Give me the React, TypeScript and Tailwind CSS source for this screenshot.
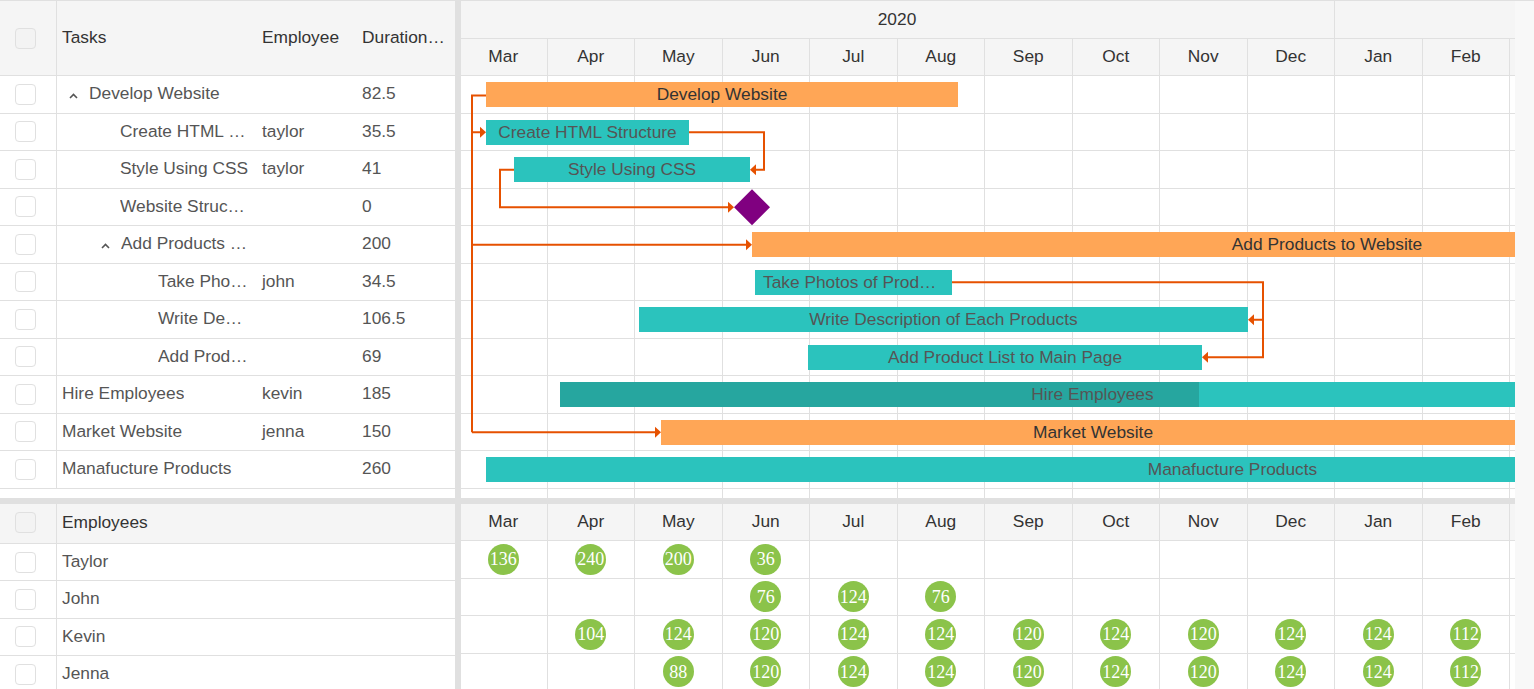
import React from 'react';

const months = ['Mar', 'Apr', 'May', 'Jun', 'Jul', 'Aug', 'Sep', 'Oct', 'Nov', 'Dec', 'Jan', 'Feb', 'Mar'];

type Task = { name: string; emp: string; dur: string; indent: string; chevron?: boolean };

const tasks: Task[] = [
  { name: 'Develop Website', emp: '', dur: '82.5', indent: 'pl-[7px]', chevron: true },
  { name: 'Create HTML Structure', emp: 'taylor', dur: '35.5', indent: 'pl-[58px]' },
  { name: 'Style Using CSS', emp: 'taylor', dur: '41', indent: 'pl-[58px]' },
  { name: 'Website Structure Complete', emp: '', dur: '0', indent: 'pl-[58px]' },
  { name: 'Add Products to Website', emp: '', dur: '200', indent: 'pl-[39px]', chevron: true },
  { name: 'Take Photos of Products', emp: 'john', dur: '34.5', indent: 'pl-[96px]' },
  { name: 'Write Description of Each Products', emp: '', dur: '106.5', indent: 'pl-[96px]' },
  { name: 'Add Product List to Main Page', emp: '', dur: '69', indent: 'pl-[96px]' },
  { name: 'Hire Employees', emp: 'kevin', dur: '185', indent: 'pl-0' },
  { name: 'Market Website', emp: 'jenna', dur: '150', indent: 'pl-0' },
  { name: 'Manafucture Products', emp: '', dur: '260', indent: 'pl-0' },
];

const ORANGE = 'bg-[#ffa656] text-[#333]';
const TEAL = 'bg-[#2bc3bd] text-[#555]';

const bars: { cls: string; label: string }[] = [
  { cls: `left-[25px] top-[6px] w-[472px] ${ORANGE}`, label: 'Develop Website' },
  { cls: `left-[25px] top-[43.5px] w-[203px] ${TEAL}`, label: 'Create HTML Structure' },
  { cls: `left-[53px] top-[81px] w-[236px] ${TEAL}`, label: 'Style Using CSS' },
  { cls: `left-[291px] top-[156px] w-[1150px] ${ORANGE}`, label: 'Add Products to Website' },
  { cls: `left-[294px] top-[193.5px] w-[197px] ${TEAL}`, label: 'Take Photos of Products' },
  { cls: `left-[178px] top-[231px] w-[609px] ${TEAL}`, label: 'Write Description of Each Products' },
  { cls: `left-[347px] top-[268.5px] w-[394px] ${TEAL}`, label: 'Add Product List to Main Page' },
  { cls: `left-[200px] top-[343.5px] w-[864px] ${ORANGE}`, label: 'Market Website' },
  { cls: `left-[25px] top-[381px] w-[1493px] ${TEAL}`, label: 'Manafucture Products' },
];

const employees: { name: string; vals: (number | null)[] }[] = [
  { name: 'Taylor', vals: [136, 240, 200, 36, null, null, null, null, null, null, null, null, null] },
  { name: 'John', vals: [null, null, null, 76, 124, 76, null, null, null, null, null, null, null] },
  { name: 'Kevin', vals: [null, 104, 124, 120, 124, 124, 120, 124, 120, 124, 124, 112, null] },
  { name: 'Jenna', vals: [null, null, 88, 120, 124, 124, 120, 124, 120, 124, 124, 112, null] },
];

function Checkbox({ header }: { header?: boolean }) {
  return (
    <div
      className={`w-[21px] h-[21px] rounded-[4px] border border-[#e0e0e0] ${header ? 'bg-[#f3f3f3]' : 'bg-white'}`}
    />
  );
}

function Chevron() {
  return (
    <svg width="9" height="6" viewBox="0 0 9 6" className="mt-[3px] mr-[11px] shrink-0">
      <polyline points="1,5 4.5,1.5 8,5" fill="none" stroke="#555" strokeWidth="1.6" />
    </svg>
  );
}

function TopGrid() {
  return (
    <div className="w-[455px] shrink-0 flex flex-col">
      <div className="h-[76px] flex border-y border-[#e0e0e0] bg-[#f5f5f5] text-[#333]">
        <div className="w-[57px] shrink-0 border-r border-[#e0e0e0] flex items-center pl-[15px]">
          <Checkbox header />
        </div>
        <div className="w-[199px] shrink-0 pl-[5px] pr-[7px] flex items-center">Tasks</div>
        <div className="w-[100px] shrink-0 px-[6px] flex items-center">Employee</div>
        <div className="w-[99px] shrink-0 pl-[6px] pr-[8px] flex items-center min-w-0">
          <span className="truncate">Duration (days)</span>
        </div>
      </div>
      {tasks.map((t, i) => (
        <div key={i} className="h-[37.5px] shrink-0 flex border-b border-[#e0e0e0]">
          <div className="w-[57px] shrink-0 border-r border-[#e0e0e0] flex items-center pl-[15px]">
            <Checkbox />
          </div>
          <div className="w-[199px] shrink-0 pl-[5px] pr-[7px] flex items-center min-w-0">
            <div className={`flex items-center min-w-0 ${t.indent}`}>
              {t.chevron && <Chevron />}
              <span className="truncate">{t.name}</span>
            </div>
          </div>
          <div className="w-[100px] shrink-0 px-[6px] flex items-center">{t.emp}</div>
          <div className="w-[99px] shrink-0 pl-[6px] pr-[8px] flex items-center">{t.dur}</div>
        </div>
      ))}
    </div>
  );
}

function TopChart() {
  return (
    <div className="w-[1054px] shrink-0 overflow-hidden flex flex-col">
      <div className="h-[39px] shrink-0 flex -ml-px border-y border-[#e0e0e0] bg-[#f5f5f5] text-[#333]">
        <div className="w-[875px] shrink-0 border-r border-[#e0e0e0] flex items-center justify-center">2020</div>
        <div className="w-[1050px] shrink-0 flex items-center justify-center">2021</div>
      </div>
      <div className="h-[37px] shrink-0 flex -ml-px border-b border-[#e0e0e0] bg-[#f5f5f5] text-[#333]">
        {months.map((m, i) => (
          <div key={i} className="w-[87.5px] shrink-0 border-r border-[#e0e0e0] flex items-center justify-center">
            {m}
          </div>
        ))}
      </div>
      <div className="relative flex-1">
        <div className="flex flex-col -ml-px">
          {tasks.map((_, r) => (
            <div key={r} className="h-[37.5px] shrink-0 flex">
              {months.map((_, c) => (
                <div key={c} className="w-[87.5px] shrink-0 border-r border-b border-[#e0e0e0]" />
              ))}
            </div>
          ))}
          <div className="h-[10px] shrink-0 flex">
            {months.map((_, c) => (
              <div key={c} className="w-[87.5px] shrink-0 border-r border-[#e0e0e0]" />
            ))}
          </div>
        </div>
        {bars.map((b, i) => (
          <div
            key={i}
            className={`absolute h-[25px] leading-[25px] px-2 text-center truncate ${b.cls}`}
          >
            {b.label}
          </div>
        ))}
        <div className="absolute left-[99px] top-[306px] w-[1065px] h-[25px] bg-[#2bc3bd] overflow-hidden">
          <div className="absolute left-0 top-0 h-full w-[639px] bg-[#26a69f]" />
          <div className="relative truncate px-2 text-center leading-[25px] text-[#555]">Hire Employees</div>
        </div>
        <svg className="absolute left-0 top-0 pointer-events-none" width="1054" height="422">
          <g stroke="#e65100" strokeWidth="2" fill="none">
            <path d="M25 19.5 H11 V356.25" />
            <path d="M11 56.25 H20" />
            <path d="M11 168.75 H286" />
            <path d="M11 356.25 H195" />
            <path d="M228 56.25 H303 V93.75 H294" />
            <path d="M53 93.75 H39 V131.25 H268" />
            <path d="M491 206.25 H802 V281.25 H746" />
            <path d="M802 243.75 H792" />
          </g>
          <g fill="#e65100">
            <polygon points="25,56.25 19,50.75 19,61.75" />
            <polygon points="291,168.75 285,163.25 285,174.25" />
            <polygon points="200,356.25 194,350.75 194,361.75" />
            <polygon points="289,93.75 295,88.25 295,99.25" />
            <polygon points="273,131.25 267,125.75 267,136.75" />
            <polygon points="787,243.75 793,238.25 793,249.25" />
            <polygon points="741,281.25 747,275.75 747,286.75" />
          </g>
          <polygon points="291,113.25 309,131.25 291,149.25 273,131.25" fill="#800080" />
        </svg>
      </div>
    </div>
  );
}

function BottomGrid() {
  return (
    <div className="w-[455px] shrink-0 flex flex-col">
      <div className="h-[40px] shrink-0 flex border-b border-[#e0e0e0] bg-[#f5f5f5] text-[#333]">
        <div className="w-[57px] shrink-0 border-r border-[#e0e0e0] flex items-center pl-[15px] pb-[2px]">
          <Checkbox header />
        </div>
        <div className="flex-1 pl-[5px] flex items-center pb-[2px]">Employees</div>
      </div>
      {employees.map((e, i) => (
        <div key={i} className="h-[37.3px] shrink-0 flex border-b border-[#e0e0e0]">
          <div className="w-[57px] shrink-0 border-r border-[#e0e0e0] flex items-center pl-[15px]">
            <Checkbox />
          </div>
          <div className="flex-1 pl-[5px] flex items-center">{e.name}</div>
        </div>
      ))}
    </div>
  );
}

function BottomChart() {
  return (
    <div className="w-[1054px] shrink-0 overflow-hidden flex flex-col">
      <div className="h-[37px] shrink-0 flex -ml-px border-b border-[#e0e0e0] bg-[#f5f5f5] text-[#333]">
        {months.map((m, i) => (
          <div key={i} className="w-[87.5px] shrink-0 border-r border-[#e0e0e0] flex items-center justify-center">
            {m}
          </div>
        ))}
      </div>
      <div className="flex flex-col -ml-px">
        {employees.map((e, r) => (
          <div key={r} className="h-[37.5px] shrink-0 flex">
            {e.vals.map((v, c) => (
              <div
                key={c}
                className="w-[87.5px] shrink-0 border-r border-b border-[#e0e0e0] flex items-center justify-center"
              >
                {v !== null && (
                  <div className="w-[31px] h-[31px] rounded-full bg-[#8bc34a] text-white flex items-center justify-center font-['Liberation_Serif',serif] text-[18px] leading-none">
                    {v}
                  </div>
                )}
              </div>
            ))}
          </div>
        ))}
      </div>
    </div>
  );
}

export default function App() {
  return (
    <div className="w-[1534px] h-[689px] overflow-hidden bg-white flex font-['Liberation_Sans',Arial,sans-serif] text-[13pt] text-[#555]">
      <div className="w-[1515px] shrink-0 flex flex-col">
        <div className="h-[498px] shrink-0 flex">
          <TopGrid />
          <div className="w-[6px] shrink-0 bg-[#e0e0e0]" />
          <TopChart />
        </div>
        <div className="h-[6px] shrink-0 bg-[#e0e0e0]" />
        <div className="flex-1 flex min-h-0">
          <BottomGrid />
          <div className="w-[6px] shrink-0 bg-[#e0e0e0]" />
          <BottomChart />
        </div>
      </div>
      <div className="w-[19px] shrink-0 bg-[#f8f8f8] border-t border-[#e0e0e0]" />
    </div>
  );
}
